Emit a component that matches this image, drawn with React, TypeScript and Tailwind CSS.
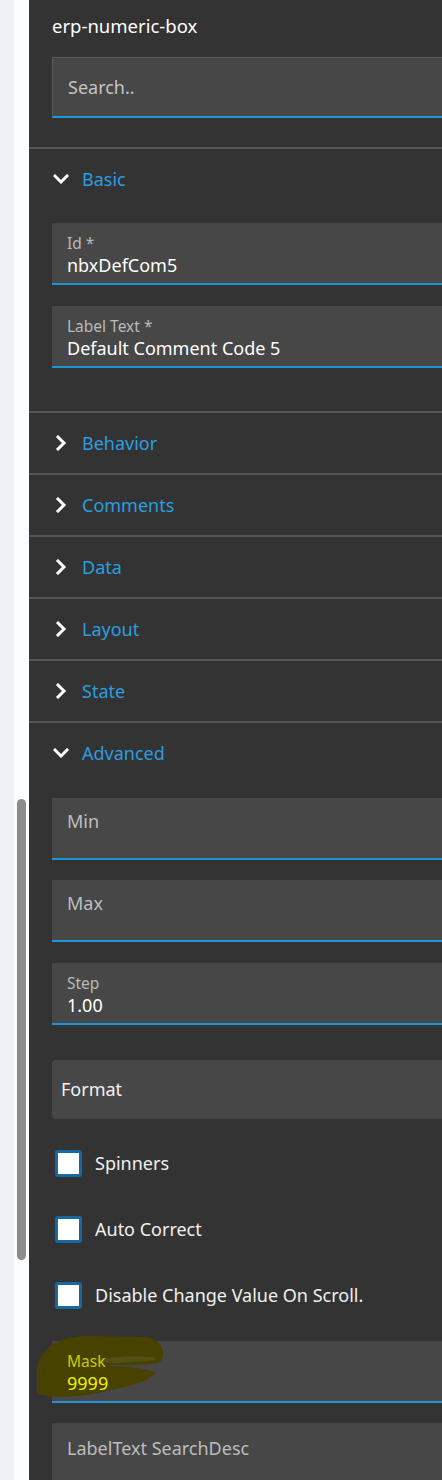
import React from "react";

const font = { fontFamily: '"Noto Sans", "Open Sans", sans-serif' };

function ChevronDown() {
  return (
    <svg width="16" height="10" viewBox="0 0 16 10" className="shrink-0">
      <polyline points="2,2 8,8 14,2" fill="none" stroke="#ffffff" strokeWidth="3" strokeLinecap="square" />
    </svg>
  );
}

function ChevronRight() {
  return (
    <svg width="16" height="16" viewBox="0 0 16 16" className="shrink-0">
      <polyline points="5,2 11,8 5,14" fill="none" stroke="#ffffff" strokeWidth="3" strokeLinecap="square" />
    </svg>
  );
}

function SectionHeader({ title, open }: { title: string; open?: boolean }) {
  return (
    <div className="h-[62px] border-t-2 border-[#555555] flex items-center pl-[24px] gap-[13px]">
      {open ? <ChevronDown /> : <ChevronRight />}
      <span className="text-[18px] text-[#2a9ee0]">{title}</span>
    </div>
  );
}

function Field({ label, value }: { label: string; value?: string }) {
  return (
    <div className="h-[62px] shrink-0 bg-[#474747] border-b-2 border-[#1f95d8] pl-[15px] flex flex-col justify-center">
      {value !== undefined ? (
        <div className="pt-[4px] flex flex-col">
          <span className="text-[15.5px] leading-[19px] text-[#b9b9b9]">{label}</span>
          <span className="text-[18px] leading-[24px] text-white">{value}</span>
        </div>
      ) : (
        <span className="text-[18px] leading-[24px] text-[#bdbdbd] -mt-[14px]">{label}</span>
      )}
    </div>
  );
}

function Check({ label }: { label: string }) {
  return (
    <div className="flex items-center h-[27px] pl-[3px] gap-[13px]">
      <span className="w-[27px] h-[27px] rounded-[3px] border-[3px] border-[#1769a3] bg-white shrink-0" />
      <span className="text-[18px] text-[#f0f0f0]">{label}</span>
    </div>
  );
}

export default function App() {
  return (
    <div className="w-[442px] h-[1480px] flex overflow-hidden bg-[#333333]" style={font}>
      <div className="w-[14px] bg-[#eef2f6] shrink-0" />
      <div className="w-[15px] bg-[#fbfcfd] shrink-0 relative">
        <div className="absolute left-[3px] top-[799px] w-[9px] h-[461px] rounded-full bg-[#8c8c8c]" />
      </div>
      <div className="flex-1 bg-[#333333]">
        <div className="pl-[23px] pt-[14px]">
          <div className="text-[18.5px] leading-[24px] text-white">erp-numeric-box</div>
          <div className="mt-[19px] h-[61px] bg-[#474747] border border-[#5c5c5c] border-r-0 border-b-2 border-b-[#1f95d8] flex items-center pl-[15px]">
            <span className="text-[18px] text-[#c4c4c4]">Search..</span>
          </div>
        </div>
        <div className="h-[29px]" />

        <SectionHeader title="Basic" open />
        <div className="pl-[23px] pt-[14px] pb-[43px] flex flex-col gap-[21px]">
          <Field label="Id *" value="nbxDefCom5" />
          <Field label="Label Text *" value="Default Comment Code 5" />
        </div>

        <SectionHeader title="Behavior" />
        <SectionHeader title="Comments" />
        <SectionHeader title="Data" />
        <SectionHeader title="Layout" />
        <SectionHeader title="State" />
        <SectionHeader title="Advanced" open />

        <div className="pl-[23px] pt-[15px]">
          <Field label="Min" />
          <div className="h-[20px]" />
          <Field label="Max" />
          <div className="h-[21px]" />
          <Field label="Step" value="1.00" />
          <div className="h-[35px]" />
          <div className="h-[59px] bg-[#474747] rounded-l-[4px] flex items-center pl-[9px]">
            <span className="text-[18px] text-[#f2f2f2]">Format</span>
          </div>
          <div className="pt-[31px] flex flex-col gap-[39px]">
            <Check label="Spinners" />
            <Check label="Auto Correct" />
            <Check label="Disable Change Value On Scroll." />
          </div>
          <div className="h-[32px]" />
          <div className="relative h-[62px] bg-[#474747] border-b-2 border-[#1f95d8] pl-[15px] flex flex-col justify-center">
            <svg className="absolute left-[-17px] top-[-6px]" width="132" height="64" viewBox="0 0 132 64">
              <path
                d="M2 42 C0 20, 16 2, 50 1 L110 2 C126 3, 132 18, 126 26 C120 31, 96 30, 66 30 C90 32, 116 33, 120 38 C118 46, 84 54, 62 58 C40 63, 12 63, 2 58 Z"
                fill="#484200"
              />
              <path d="M62 24 C80 22, 100 20, 118 22 L121 25 L100 27 C88 28, 74 28, 62 27 Z" fill="#525017" />
            </svg>
            <div className="relative pt-[4px] flex flex-col">
              <span className="text-[15.5px] leading-[19px] text-[#caca00]">Mask</span>
              <span className="text-[18px] leading-[24px] text-[#f0f000]">9999</span>
            </div>
          </div>
          <div className="h-[20px]" />
          <div className="h-[80px] bg-[#474747] pl-[15px] pt-[13px]">
            <span className="text-[18px] leading-[24px] text-[#bdbdbd]">LabelText SearchDesc</span>
          </div>
        </div>
      </div>
    </div>
  );
}
